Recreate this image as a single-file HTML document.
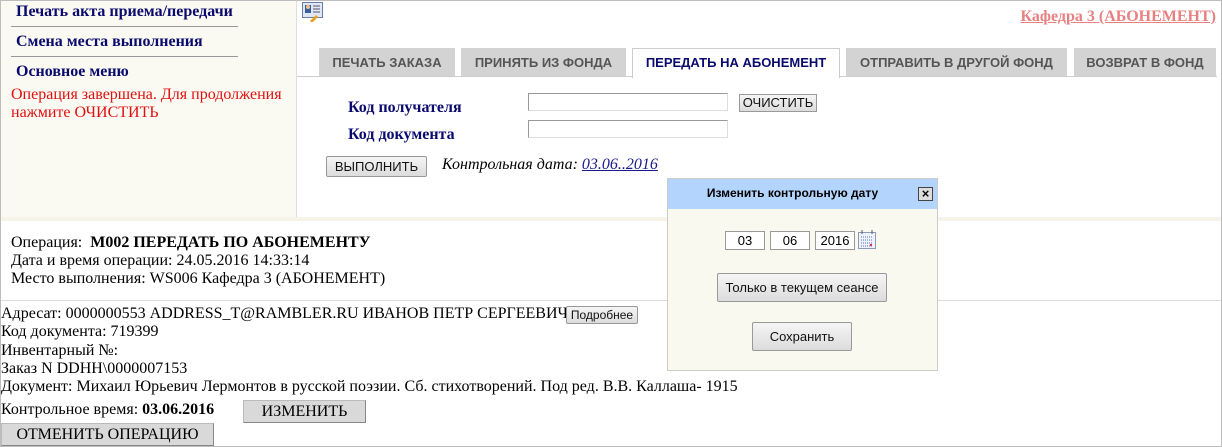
<!DOCTYPE html>
<html><head><meta charset="utf-8"><style>
*{box-sizing:border-box}
body{margin:0;width:1222px;height:447px;position:relative;overflow:hidden;font-family:"Liberation Serif",serif;font-size:16px;background:#fff}
.a{position:absolute;white-space:nowrap}
.outer{position:absolute;left:0;top:0;width:1222px;height:447px;border:1px solid #bdbdbd}
.left{position:absolute;left:1px;top:1px;width:296px;height:217px;background:#fafaf2;border-right:1px solid #ddd}
.menu{color:#0a0a6e;font-weight:bold;font-size:16px}
.hr{position:absolute;left:11px;width:227px;height:1px;background:#999}
.tab{position:absolute;top:48px;height:28px;background:#d3d3d3;font-family:"Liberation Sans",sans-serif;font-weight:bold;font-size:13px;color:#555;text-align:center;line-height:30px}
.btn{position:absolute;font-family:"Liberation Sans",sans-serif;font-size:13px;border:1px solid #999;border-radius:2px;background:linear-gradient(#f5f5f5,#dcdcdc);text-align:center;color:#111}
.inp{position:absolute;border:1px solid #999;border-bottom-color:#ddd;border-right-color:#ddd;background:#fff}
.lbl{color:#0a0a6e;font-weight:bold;font-size:16px}
.sq{position:absolute;background:#d9d9d9;border:1px solid #bbb;border-right-color:#888;border-bottom-color:#888;text-align:center;font-size:16px}
</style></head><body>
<div class="outer"></div>
<div class="left"></div>
<div class="a menu" style="left:16px;top:3px">Печать акта приема/передачи</div>
<div class="hr" style="top:26px"></div>
<div class="a menu" style="left:16px;top:33px">Смена места выполнения</div>
<div class="hr" style="top:56px"></div>
<div class="a menu" style="left:16px;top:63px">Основное меню</div>
<div class="a" style="left:11px;top:86px;color:#e01010;font-size:16px;line-height:18px;white-space:normal;width:285px">Операция завершена. Для продолжения нажмите ОЧИСТИТЬ</div>
<svg class="a" style="left:302px;top:2px" width="22" height="20" viewBox="0 0 22 20"><rect x="0.5" y="0.5" width="20" height="15" fill="#dfe7f5" stroke="#6a7ca8"/><rect x="3" y="3" width="6" height="8" fill="#3a5fa0"/><circle cx="6" cy="5" r="2" fill="#f0c090"/><path d="M11 4h7M11 7h7M11 10h7" stroke="#556"/><path d="M8 19l6-6 2 2-6 6z" fill="#e8a020"/></svg>
<div class="a" style="right:6px;top:8px;color:#e88080;font-weight:bold;font-size:16px;text-decoration:underline">Кафедра 3 (АБОНЕМЕНТ)</div>
<div class="a" style="left:297px;top:76px;width:920px;height:1px;background:#ccc"></div>
<div class="tab" style="left:319px;width:136px">ПЕЧАТЬ ЗАКАЗА</div>
<div class="tab" style="left:461px;width:165px">ПРИНЯТЬ ИЗ ФОНДА</div>
<div class="tab" style="left:632px;width:208px;height:30px;background:#fff;border:1px solid #ccc;border-bottom:none;color:#0a0a6e;line-height:28px">ПЕРЕДАТЬ НА АБОНЕМЕНТ</div>
<div class="tab" style="left:846px;width:221px">ОТПРАВИТЬ В ДРУГОЙ ФОНД</div>
<div class="tab" style="left:1074px;width:142px">ВОЗВРАТ В ФОНД</div>
<div class="a lbl" style="left:348px;top:99px">Код получателя</div>
<div class="a lbl" style="left:348px;top:126px">Код документа</div>
<div class="inp" style="left:528px;top:93px;width:200px;height:18px"></div>
<div class="inp" style="left:528px;top:120px;width:200px;height:18px"></div>
<div class="btn" style="left:739px;top:94px;width:78px;height:18px;line-height:16px;border-radius:0">ОЧИСТИТЬ</div>
<div class="btn" style="left:326px;top:156px;width:101px;height:21px;line-height:19px">ВЫПОЛНИТЬ</div>
<div class="a" style="left:442px;top:156px;font-style:italic;font-size:16px">Контрольная дата: <span style="color:#1a1a8a;text-decoration:underline">03.06..2016</span></div>
<div class="a" style="left:1px;top:217px;width:1220px;height:4px;background:#f6f4e8"></div>
<div class="a" style="left:1px;top:300px;width:1220px;height:1px;background:#ddd"></div>
<div class="a" style="left:11px;top:234px;font-size:16px;line-height:18px">Операция: &nbsp;<b>М002 ПЕРЕДАТЬ ПО АБОНЕМЕНТУ</b><br>Дата и время операции: 24.05.2016 14:33:14<br>Место выполнения: WS006 Кафедра 3 (АБОНЕМЕНТ)</div>
<div class="a" style="left:1px;top:305px;font-size:16px;line-height:18.3px">Адресат: 0000000553 ADDRESS_T@RAMBLER.RU ИВАНОВ ПЕТР СЕРГЕЕВИЧ<br>Код документа: 719399<br>Инвентарный №:<br>Заказ N DDHH\0000007153<br>Документ: Михаил Юрьевич Лермонтов в русской поэзии. Сб. стихотворений. Под ред. В.В. Каллаша- 1915</div>
<div class="btn" style="left:566px;top:306px;width:72px;height:18px;line-height:16px;font-size:12px">Подробнее</div>
<div class="a" style="left:1px;top:401px">Контрольное время: <b>03.06.2016</b></div>
<div class="sq" style="left:243px;top:400px;width:123px;height:23px;line-height:21px">ИЗМЕНИТЬ</div>
<div class="sq" style="left:1px;top:423px;width:213px;height:23px;line-height:21px">ОТМЕНИТЬ ОПЕРАЦИЮ</div>
<div class="a" style="left:667px;top:178px;width:271px;height:193px;background:#f9f9f0;border:1px solid #ccc"></div>
<div class="a" style="left:668px;top:179px;width:269px;height:30px;background:#b3d4fc;font-family:'Liberation Sans',sans-serif;font-weight:bold;font-size:12px;line-height:28px;text-align:center;padding-right:20px">Изменить контрольную дату</div>
<div class="a" style="left:918px;top:187px;width:15px;height:14px;border:1px solid #444;background:#ddd;font-family:'Liberation Sans',sans-serif;font-size:13px;line-height:11px;text-align:center;font-weight:bold">×</div>
<div class="inp" style="left:725px;top:231px;width:40px;height:19px;font-family:'Liberation Sans',sans-serif;font-size:13px;text-align:center;line-height:17px;border-color:#999">03</div>
<div class="inp" style="left:770px;top:231px;width:40px;height:19px;font-family:'Liberation Sans',sans-serif;font-size:13px;text-align:center;line-height:17px;border-color:#999">06</div>
<div class="inp" style="left:815px;top:231px;width:40px;height:19px;font-family:'Liberation Sans',sans-serif;font-size:13px;text-align:center;line-height:17px;border-color:#999">2016</div>
<svg class="a" style="left:858px;top:229px" width="19" height="21" viewBox="0 0 19 21"><rect x="0.5" y="3.5" width="17" height="16" fill="#eef2fa" stroke="#8a9ab8"/><path d="M4 1v4M14 1v4" stroke="#556"/><path d="M3 8h12M3 11h12M3 14h12M3 17h12" stroke="#6070c0" stroke-dasharray="1 1"/><rect x="12" y="15" width="2" height="2" fill="#d33"/></svg>
<div class="btn" style="left:717px;top:273px;width:170px;height:29px;line-height:27px">Только в текущем сеансе</div>
<div class="btn" style="left:752px;top:322px;width:100px;height:29px;line-height:27px">Сохранить</div>
</body></html>
